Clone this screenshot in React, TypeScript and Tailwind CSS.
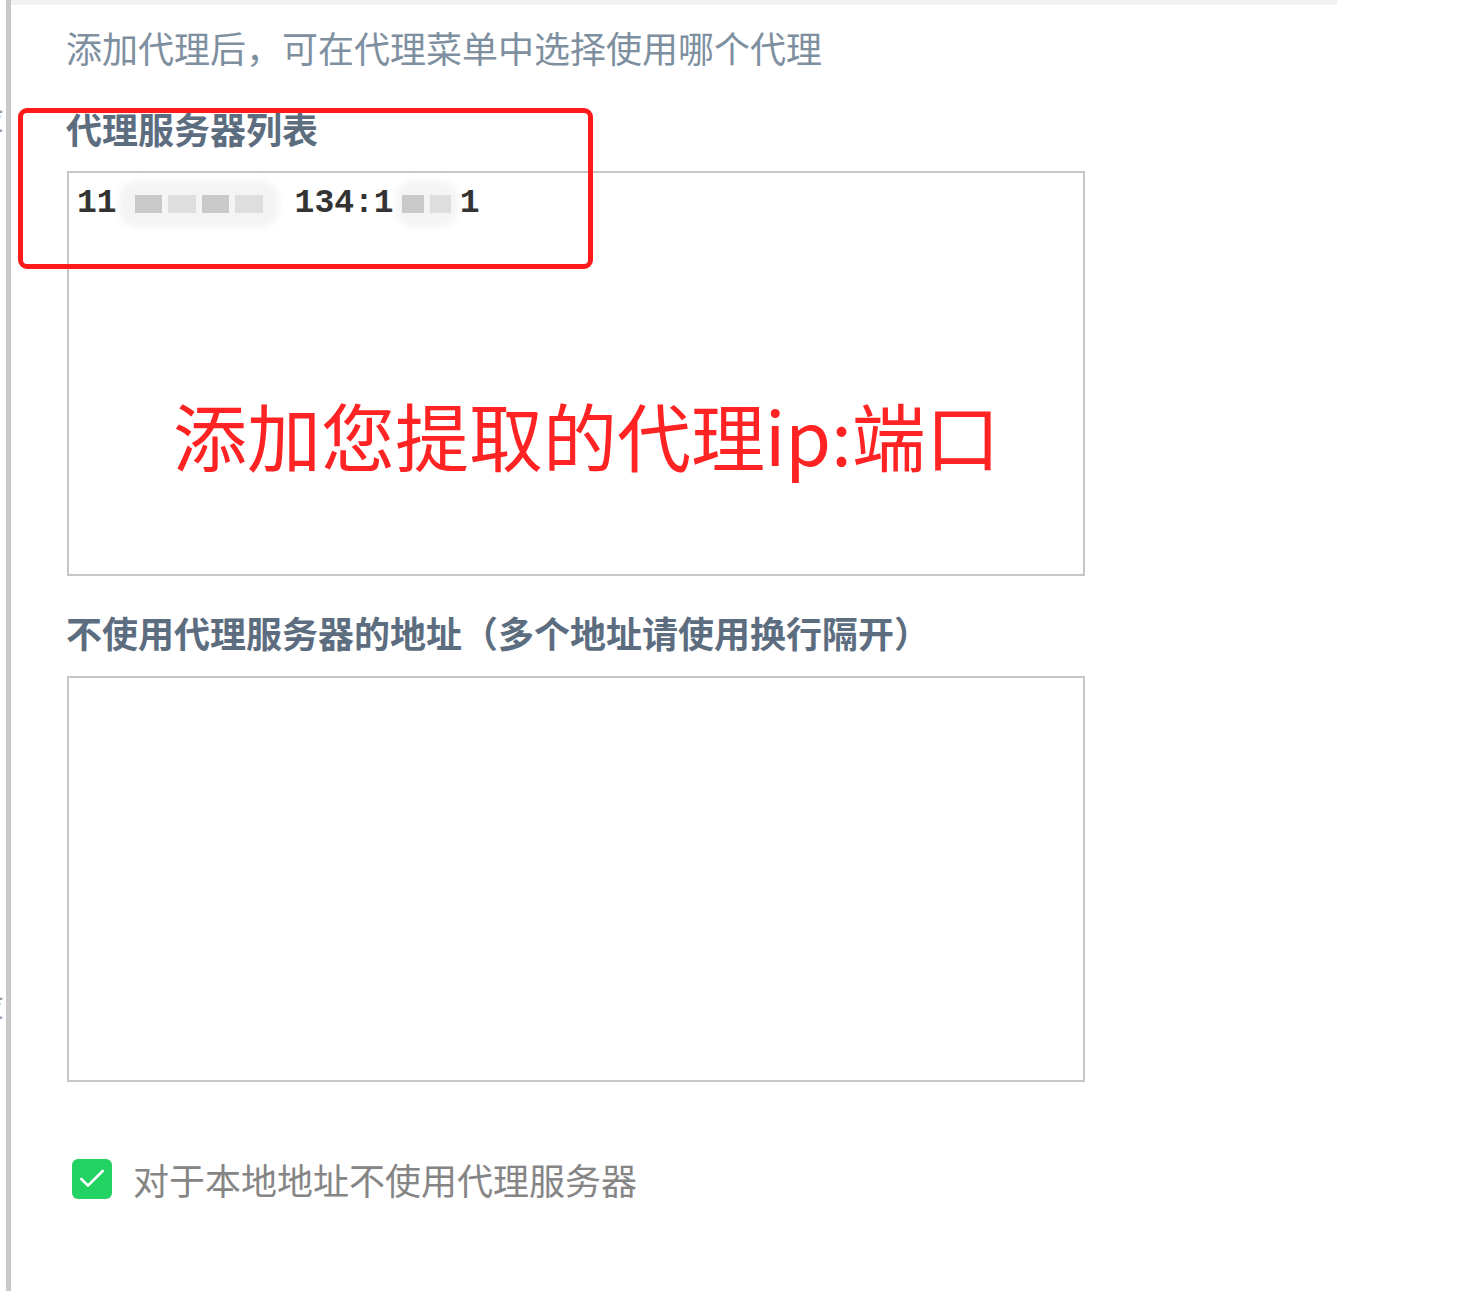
import { Check } from 'lucide-react';

const cjk = { fontFamily: '"Noto Sans CJK SC", "Noto Sans", sans-serif' };
const mono = { fontFamily: '"Liberation Mono", "Courier New", monospace' };

function Mosaic({ width }: { width: number }) {
  // blurred pixel blocks that hide part of the address
  return (
    <span
      className="relative mx-[2px] inline-block h-[46px] align-middle"
      style={{ width }}
    >
      <span className="absolute inset-0 rounded-[18px] bg-[#f4f4f4] blur-[3px]" />
      <span className="absolute inset-x-[10%] top-[14px] flex h-[18px] gap-[6px]">
        {Array.from({ length: Math.max(1, Math.round(width / 40)) }).map((_, i) => (
          <span
            key={i}
            className={`h-full flex-1 ${i % 2 === 0 ? 'bg-[#c9c9c9]' : 'bg-[#dedede]'}`}
          />
        ))}
      </span>
    </span>
  );
}

export default function App() {
  return (
    <div className="relative flex min-h-[1291px] w-[1467px] bg-white" style={cjk}>
      {/* left window edge */}
      <div className="flex shrink-0">
        <div className="relative w-[6px] overflow-hidden">
          <span className="absolute left-[-30px] top-[98px] text-[34px] leading-none text-[#9a9a9a]">设</span>
          <span className="absolute left-[-30px] top-[985px] text-[34px] leading-none text-[#9a9a9a]">设</span>
        </div>
        <div className="w-[5px] bg-[#c8c8c8]" />
      </div>

      <div className="flex flex-1 flex-col">
        <div className="h-[5px] w-[1326px] bg-[#f1f1f1]" />

        <div className="flex flex-col pl-[55px]">
          <p className="mt-[24px] text-[36px] leading-[36px] text-[#7e8fa0]">
            添加代理后，可在代理菜单中选择使用哪个代理
          </p>

          <p className="mt-[45px] text-[36px] font-bold leading-[36px] text-[#5d6d80]">
            代理服务器列表
          </p>

          <div className="ml-[1px] mt-[25px] flex h-[405px] w-[1018px] flex-col border-2 border-[#c6c6c6]">
            <div className="flex items-center pl-[8px] pt-[8px] text-[33px] font-semibold leading-[46px] text-[#333]" style={mono}>
              <span>11</span>
              <Mosaic width={160} />
              <span className="ml-[14px]">134:1</span>
              <Mosaic width={62} />
              <span>1</span>
            </div>
            <p className="ml-[104px] mt-[170px] text-[74px] leading-[74px] text-[#ff2323]">
              添加您提取的代理ip:端口
            </p>
          </div>

          <p className="mt-[38px] text-[36px] font-bold leading-[36px] text-[#5d6d80]">
            不使用代理服务器的地址（多个地址请使用换行隔开）
          </p>

          <div className="ml-[1px] mt-[26px] h-[406px] w-[1018px] border-2 border-[#c6c6c6]" />

          <label className="ml-[6px] mt-[77px] flex items-center gap-[21px]">
            <span className="flex h-[40px] w-[40px] items-center justify-center rounded-[6px] bg-[#22d263]">
              <Check className="h-[32px] w-[32px] text-white" strokeWidth={2} />
            </span>
            <span className="text-[36px] leading-[40px] text-[#858585]">对于本地地址不使用代理服务器</span>
          </label>
        </div>
      </div>

      {/* red annotation frame */}
      <div className="absolute left-[18px] top-[108px] h-[161px] w-[575px] rounded-[9px] border-[5px] border-[#ff1a1a]" />
    </div>
  );
}
